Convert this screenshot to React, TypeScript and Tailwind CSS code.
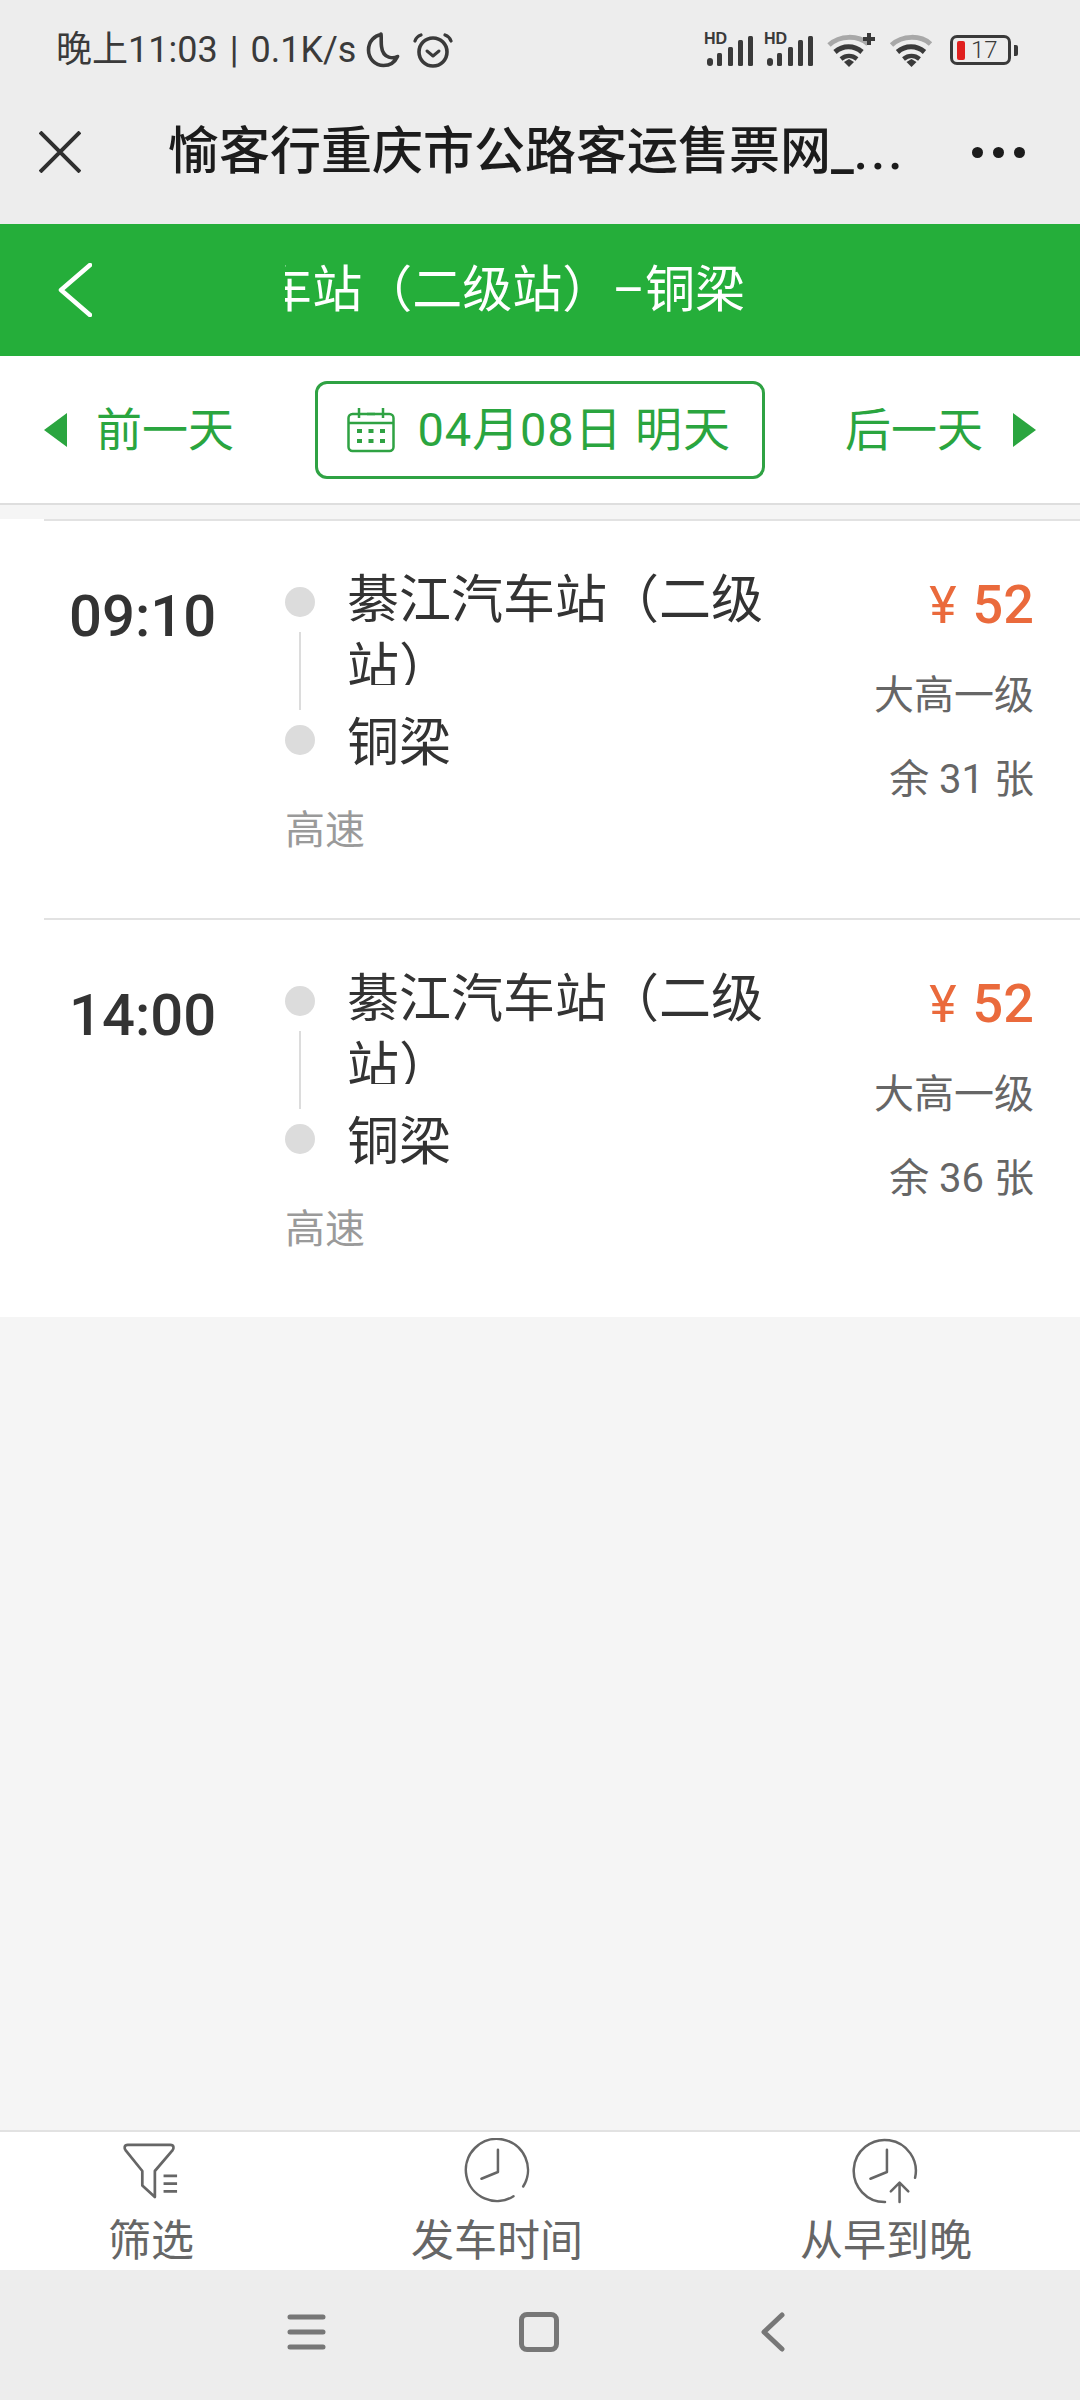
const cjk = "font-['Roboto','Noto_Sans_CJK_SC',sans-serif]"

function Moon() {
  return (
    <svg width="34" height="36" viewBox="0 0 34 36" fill="none" stroke="#3a3a3a" strokeWidth="3.6" strokeLinejoin="round">
      <path d="M15 2.500C9 3.500 2.500 9 2.500 18c0 8.500 6.500 15.500 15 15.500 6.500 0 11.500-3.500 14-9-3.500 2-14.500 3-16-10-.6-5 0-9.500-.5-12.500Z" />
    </svg>
  )
}

function Alarm() {
  return (
    <svg width="40" height="36" viewBox="0 0 40 36" fill="none" stroke="#3a3a3a" strokeLinecap="round">
      <circle cx="20" cy="20" r="14" strokeWidth="3.600" />
      <path d="M14 19l6 5 6-5" strokeWidth="3" strokeLinejoin="round" />
      <path d="M2 9c1-3 3-5 6-6M38 9c-1-3-3-5-6-6" strokeWidth="3.200" />
    </svg>
  )
}

function Signal() {
  return (
    <div className="relative h-[34px] w-[49px]">
      <span className="absolute left-[-1px] top-[-2px] font-['Liberation_Sans',sans-serif] text-[16px] leading-[16px] font-bold text-[#3a3a3a]">HD</span>
      <svg className="absolute left-0 top-0" width="49" height="34" viewBox="0 0 49 34" fill="#3a3a3a">
        <rect x="2" y="25" width="6" height="8" rx="3" />
        <rect x="12" y="20" width="5" height="13" rx="1.500" />
        <rect x="23" y="14" width="5" height="19" rx="1.500" />
        <rect x="33" y="7" width="5" height="26" rx="1.500" />
        <rect x="43" y="3" width="5" height="30" rx="1.500" />
      </svg>
    </div>
  )
}

function Wifi({ plus }: { plus?: boolean }) {
  return (
    <svg width={plus ? 50 : 46} height="36" viewBox={plus ? "0 0 50 36" : "0 0 43 36"} fill="none" strokeLinecap="butt">
      <path d="M2 13C13 3 31 3 41 12" stroke="#a8a8a8" strokeWidth="5" />
      <path d="M8 20c8-7 19-7 27 0" stroke="#3a3a3a" strokeWidth="5" />
      <path d="M14 27c5-4 11-4 16 0" stroke="#3a3a3a" strokeWidth="4.500" />
      <path d="M17 30l5-3 5 3-5 5Z" fill="#3a3a3a" />
      {plus && <path d="M42 1v12M36 7h12" stroke="#3a3a3a" strokeWidth="4" />}
    </svg>
  )
}

function Battery() {
  return (
    <div className="flex items-center">
      <div className="flex h-[30px] w-[61px] items-center rounded-[7px] border-[3px] border-[#3a3a3a] pl-[4px]">
        <div className="h-[19px] w-[8px] rounded-[2px] bg-[#e0201f]" />
        <span className={`ml-[6px] text-[24px] leading-[24px] font-light text-[#3a3a3a] ${cjk}`}>17</span>
      </div>
      <div className="ml-[3px] h-[11px] w-[4px] rounded-r-[2px] bg-[#3a3a3a]" />
    </div>
  )
}

function CalendarIcon() {
  return (
    <svg width="48" height="46" viewBox="0 0 48 46" fill="none" stroke="#2fa243" strokeWidth="2.500">
      <rect x="1.500" y="7" width="45" height="37" rx="4" />
      <path d="M1.500 16h45M12 1v10M36 1v10M20 7h8" />
      <g fill="#2fa243" stroke="none">
        <rect x="10" y="22" width="5" height="4" />
        <rect x="21.500" y="22" width="5" height="4" />
        <rect x="33" y="22" width="5" height="4" />
        <rect x="10" y="32" width="5" height="4" />
        <rect x="21.500" y="32" width="5" height="4" />
        <rect x="33" y="32" width="5" height="4" />
      </g>
    </svg>
  )
}

function Trip({ time, seats }: { time: string; seats: string }) {
  return (
    <div className="ml-[44px] flex h-[399px] border-t-2 border-[#e2e2e2] pr-[46px]">
      <div className={`w-[241px] pt-[66px] pl-[25px] text-[58px] leading-[58px] font-medium text-[#333] ${cjk}`}>{time}</div>
      <div className="w-[490px]">
        <div className="flex">
          <div className="flex w-[30px] flex-col items-center pt-[66px]">
            <div className="h-[30px] w-[30px] rounded-full bg-[#dcdcdc]" />
            <div className="mt-[15px] h-[78px] w-[2px] bg-[#dcdcdc]" />
            <div className="mt-[15px] h-[30px] w-[30px] rounded-full bg-[#dcdcdc]" />
          </div>
          <div className="ml-[32px] w-[430px] pt-[46px]">
            <div className={`h-[118px] overflow-hidden text-[52px] leading-[68px] text-[#333] ${cjk}`}>綦江汽车站（二级站）</div>
            <div className={`mt-[25px] text-[52px] leading-[68px] text-[#333] ${cjk}`}>铜梁</div>
          </div>
        </div>
        <div className={`mt-[28px] text-[40px] leading-[50px] text-[#9a9a9a] ${cjk}`}>高速</div>
      </div>
      <div className="flex flex-1 flex-col items-end pt-[50px]">
        <div className={`flex items-baseline text-[#ea6a3c] ${cjk}`}>
          <span className="mr-[16px] text-[52px] leading-[68px]">¥</span>
          <span className="text-[54px] leading-[68px] font-medium">52</span>
        </div>
        <div className={`mt-[31px] text-[40px] leading-[50px] text-[#666] ${cjk}`}>大高一级</div>
        <div className={`mt-[34px] text-[40px] leading-[50px] text-[#666] ${cjk}`}>{seats}</div>
      </div>
    </div>
  )
}

export default function App() {
  return (
    <div className={`flex h-[2400px] w-[1080px] flex-col overflow-hidden bg-[#f5f5f5] ${cjk}`}>
      {/* status bar */}
      <div className="flex h-[100px] items-center justify-between bg-[#ededed] pr-[62px] pl-[56px]">
        <div className="flex items-center">
          <span className="text-[36px] leading-[44px] whitespace-nowrap text-[#3a3a3a]">
            晚上11:03<span className="mx-[12px]">|</span>0.1K/s
          </span>
          <div className="ml-[10px]"><Moon /></div>
          <div className="ml-[13px]"><Alarm /></div>
        </div>
        <div className="flex items-center gap-[11px]">
          <Signal />
          <Signal />
          <div className="ml-[2px]"><Wifi plus /></div>
          <Wifi />
          <div className="ml-[5px]"><Battery /></div>
        </div>
      </div>

      {/* wechat title */}
      <div className="flex h-[124px] items-center bg-[#ededed] pr-[55px] pb-[20px] pl-[39px]">
        <svg width="42" height="42" viewBox="0 0 42 42" stroke="#2f2f2f" strokeWidth="4">
          <path d="M1 1l40 40M41 1L1 41" />
        </svg>
        <div className="ml-[87px] text-[51px] leading-[64px] font-medium whitespace-nowrap text-[#1c1c1c]">
          愉客行重庆市公路客运售票网_<span className="tracking-[3px]">...</span>
        </div>
        <div className="ml-auto flex gap-[10px]">
          <div className="h-[11px] w-[11px] rounded-full bg-[#1c1c1c]" />
          <div className="h-[11px] w-[11px] rounded-full bg-[#1c1c1c]" />
          <div className="h-[11px] w-[11px] rounded-full bg-[#1c1c1c]" />
        </div>
      </div>

      {/* green header */}
      <div className="flex h-[132px] items-center bg-[#25ae3a] pl-[58px]">
        <svg width="34" height="54" viewBox="0 0 34 54" fill="none" stroke="#fff" strokeWidth="4.500" strokeLinecap="round" strokeLinejoin="round">
          <path d="M32 2L3 27l29 25" />
        </svg>
        <div className="ml-[193px] flex w-[460px] justify-end overflow-hidden">
          <span className="text-[50px] leading-[64px] whitespace-nowrap text-white">汽车站（二级站）–铜梁</span>
        </div>
      </div>

      {/* date switcher */}
      <div className="flex h-[149px] items-center justify-between border-b-2 border-[#dedede] bg-white px-[44px] text-[#2aa53f]">
        <div className="flex items-center">
          <div className="h-0 w-0 border-y-[17px] border-r-[23px] border-y-transparent border-r-[#2aa53f]" />
          <span className="ml-[29px] text-[46px] leading-[60px]">前一天</span>
        </div>
        <div className="flex h-[98px] w-[450px] items-center rounded-[12px] border-[3px] border-[#2fa243] pl-[29px]">
          <CalendarIcon />
          <span className="ml-[23px] text-[47px] leading-[60px] tracking-[0.9px] whitespace-nowrap">04月08日 明天</span>
        </div>
        <div className="flex items-center">
          <span className="mr-[30px] text-[46px] leading-[60px]">后一天</span>
          <div className="h-0 w-0 border-y-[17px] border-l-[23px] border-y-transparent border-l-[#2aa53f]" />
        </div>
      </div>

      {/* trips */}
      <div className="mt-[14px] bg-white">
        <Trip time="09:10" seats="余 31 张" />
        <Trip time="14:00" seats="余 36 张" />
      </div>
      <div className="flex-1" />

      {/* sort bar */}
      <div className="flex h-[140px] justify-between overflow-hidden border-t-2 border-[#e2e2e2] bg-white px-[108px] text-[#666]">
        <div className="flex flex-col items-center">
          <svg className="mt-[11px]" width="58" height="58" viewBox="0 0 58 58" fill="none" stroke="#666" strokeWidth="2.800" strokeLinejoin="round" strokeLinecap="round">
            <path d="M5 2h44c4 0 4 4 2 6L33 29v27l-13-12V29L3 8C1 6 1 2 5 2Z" />
            <path d="M42 34h14M42 42h14M42 50h14" strokeLinecap="butt" />
          </svg>
          <span className="mt-[13px] text-[43px] leading-[58px] whitespace-nowrap">筛选</span>
        </div>
        <div className="flex flex-col items-center">
          <svg className="mt-[6px] mr-[2px]" width="68" height="68" viewBox="0 0 68 68" fill="none" stroke="#666" strokeWidth="2.600" strokeLinecap="round" strokeLinejoin="round">
            <path d="M52 60A32 32 0 1 1 62 50" />
            <path d="M36 12v23l-17 7" />
          </svg>
          <span className="mt-[8px] text-[43px] leading-[58px] whitespace-nowrap">发车时间</span>
        </div>
        <div className="flex flex-col items-center">
          <svg className="mt-[6px] mr-[2px]" width="68" height="68" viewBox="0 0 68 68" fill="none" stroke="#666" strokeWidth="2.600" strokeLinecap="round" strokeLinejoin="round">
            <path d="M34 66A32 32 0 1 1 65 41" />
            <path d="M36 12v23l-17 7" />
            <path d="M49 66V46M40 55l9-9 9 9" />
          </svg>
          <span className="mt-[8px] text-[43px] leading-[58px] whitespace-nowrap">从早到晚</span>
        </div>
      </div>

      {/* android nav */}
      <div className="flex h-[130px] items-center bg-[#ededed] pb-[6px] pl-[287px]">
        <svg width="39" height="36" viewBox="0 0 39 36" stroke="#777" strokeWidth="5" strokeLinecap="round">
          <path d="M3 3h33M3 18h33M3 33h33" />
        </svg>
        <div className="ml-[193px] h-[40px] w-[40px] rounded-[8px] border-[5px] border-[#777]" />
        <svg className="ml-[202px]" width="24" height="40" viewBox="0 0 24 40" fill="none" stroke="#777" strokeWidth="5" strokeLinecap="round" strokeLinejoin="round">
          <path d="M21 3L3 20l18 17" />
        </svg>
      </div>
    </div>
  )
}
